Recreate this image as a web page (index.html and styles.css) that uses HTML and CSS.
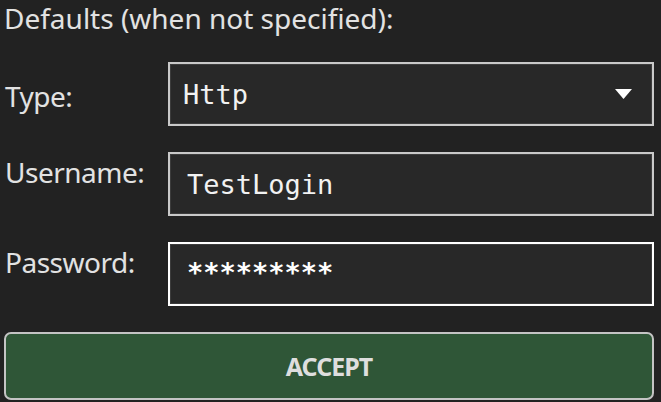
FILE: index.html
```html
<!DOCTYPE html>
<html>
<head>
<meta charset="utf-8">
<link rel="stylesheet" href="styles.css">
</head>
<body>
<div class="page">
  <div class="heading">Defaults (when not specified):</div>
  <div class="form">
    <div class="label label-center">Type:</div>
    <div class="field select">
      <span class="value">Http</span>
      <svg class="arrow" width="17" height="10" viewBox="0 0 17 10"><polygon points="0,0 17,0 8.5,10" fill="#ffffff"/></svg>
    </div>
    <div class="label">Username:</div>
    <div class="field text">TestLogin</div>
    <div class="label">Password:</div>
    <div class="field text focused"><span class="stars">*********</span></div>
  </div>
  <div class="button">ACCEPT</div>
</div>
</body>
</html>
```
FILE: styles.css
```css
html, body {
  margin: 0;
  padding: 0;
  background: #222222;
}
body {
  width: 661px;
  height: 402px;
  overflow: hidden;
  font-family: "Noto Sans", "Open Sans", sans-serif;
  color: #e2e2e2;
}
.page {
  padding: 0 7px 0 4px;
}
.heading {
  font-size: 28px;
  line-height: 36px;
  margin-bottom: 26px;
}
.form {
  display: grid;
  grid-template-columns: 164px 486px;
  grid-auto-rows: 64px;
  row-gap: 26px;
}
.label {
  font-size: 28px;
  line-height: 36px;
  letter-spacing: -0.5px;
  padding-top: 2px;
  padding-left: 1px;
}
.label-center {
  align-self: center;
  padding-top: 4px;
}
.field {
  box-sizing: border-box;
  border: 2px solid #c9c9c9;
  background: #282828;
  box-shadow: inset 0 0 0 1px #3c3c3c;
  display: flex;
  align-items: center;
  font-family: "DejaVu Sans Mono", monospace;
  font-size: 27px;
  color: #f2f2f2;
}
.select {
  padding: 0 20px 0 13px;
  justify-content: space-between;
}
.text {
  padding-left: 17px;
}
.focused {
  border-color: #ffffff;
}
.stars {
  font-weight: 700;
  color: #ffffff;
  position: relative;
  top: -2px;
}
.arrow {
  display: block;
}
.button {
  box-sizing: border-box;
  margin-top: 26px;
  height: 68px;
  border: 2px solid #c4c4c4;
  border-radius: 7px;
  background: #2f5637;
  display: flex;
  align-items: center;
  justify-content: center;
  font-size: 25px;
  font-weight: 700;
  letter-spacing: -1px;
  color: #dedede;
}
```
